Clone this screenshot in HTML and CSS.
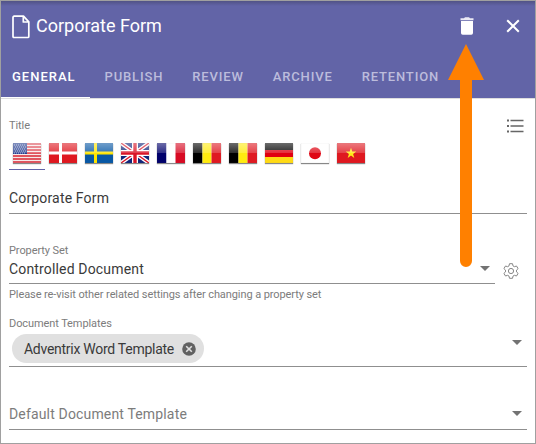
FILE: index.html
```html
<!DOCTYPE html>
<html lang="en">
<head>
<meta charset="utf-8">
<title>Corporate Form</title>
<link rel="stylesheet" href="styles.css">
</head>
<body>
<main class="panel">
  <header class="header">
    <div class="titlebar">
      <svg class="doc-icon" width="18" height="24" viewBox="0 0 18 24"><path d="M2.2 1.2H11.5L16.8 6.8V21.5Q16.8 22.5 15.8 22.5H2.2Q1 22.5 1 21.5V2.4Q1 1.2 2.2 1.2ZM11.3 1.5V7H16.5" fill="none" stroke="#fff" stroke-width="1.7" stroke-linejoin="round"/></svg>
      <h1 class="title">Corporate Form</h1>
      <svg class="trash" width="14" height="18" viewBox="0 0 14 18"><path d="M.5 1.2H4L5 .3H9L10 1.2H13.5V3.2H.5Z" fill="#ebeaf5"/><path d="M1 4H13V16Q13 17.7 11.3 17.7H2.7Q1 17.7 1 16Z" fill="#fff"/></svg>
      <svg class="close" width="14" height="14" viewBox="0 0 14 14"><path d="M1.2 1.2L12.8 12.8M12.8 1.2L1.2 12.8" stroke="#fff" stroke-width="2"/></svg>
    </div>
    <nav class="tabs">
      <a class="tab active">GENERAL</a>
      <a class="tab">PUBLISH</a>
      <a class="tab">REVIEW</a>
      <a class="tab">ARCHIVE</a>
      <a class="tab">RETENTION</a>
    </nav>
  </header>
  <section class="content">
    <div class="label-row">
      <span class="label">Title</span>
      <svg class="list-icon" width="18" height="14" viewBox="0 0 18 14"><path d="M1 1.5H3M1 7H3M1 12.5H3" stroke="#666" stroke-width="2"/><path d="M4.5 1.5H17.5M4.5 7H17.5M4.5 12.5H17.5" stroke="#666" stroke-width="1.6"/></svg>
    </div>
    <div class="flags">
      <span class="slot selected"><svg class="flag" viewBox="0 0 28 20"><path fill="#f7e9e9" d="M0 0H28V20H0Z"/><path d="M0 1H28M0 4H28M0 7H28M0 10H28M0 13H28M0 16H28M0 19H28" stroke="#d92532" stroke-width="1.5"/><path fill="#263f91" d="M0 0H14V11H0Z"/><path d="M1 2H13M2 4H13M1 6H13M2 8H13M1 10H13" stroke="#b9c2e0" stroke-width=".9" stroke-dasharray="1 1"/></svg></span>
      <span class="slot"><svg class="flag" viewBox="0 0 28 20"><path fill="#df1820" d="M0 0H28V20H0Z"/><path stroke="#fff" stroke-width="3" d="M11.5 0V20M0 10H28"/></svg></span>
      <span class="slot"><svg class="flag" viewBox="0 0 28 20"><path fill="#0858a5" d="M0 0H28V20H0Z"/><path stroke="#ffe500" stroke-width="3" d="M10.5 0V20M0 10H28"/></svg></span>
      <span class="slot"><svg class="flag" viewBox="0 0 28 20"><path fill="#10257a" d="M0 0H28V20H0Z"/><path stroke="#fff" stroke-width="4" d="M0 0L28 20M28 0L0 20"/><path stroke="#d91427" stroke-width="1.4" d="M0 0L28 20M28 0L0 20"/><path stroke="#fff" stroke-width="6" d="M14 0V20M0 10H28"/><path stroke="#d91427" stroke-width="3.4" d="M14 0V20M0 10H28"/></svg></span>
      <span class="slot"><svg class="flag" viewBox="0 0 28 20"><path fill="#00006b" d="M0 0H9.5V20H0Z"/><path fill="#fff" d="M9.5 0H18.5V20H9.5Z"/><path fill="#d80b24" d="M18.5 0H28V20H18.5Z"/></svg></span>
      <span class="slot"><svg class="flag" viewBox="0 0 28 20"><path d="M0 0H9.5V20H0Z"/><path fill="#ffeb10" d="M9.5 0H18.5V20H9.5Z"/><path fill="#df1a22" d="M18.5 0H28V20H18.5Z"/></svg></span>
      <span class="slot"><svg class="flag" viewBox="0 0 28 20"><path d="M0 0H9.5V20H0Z"/><path fill="#ffeb10" d="M9.5 0H18.5V20H9.5Z"/><path fill="#df1a22" d="M18.5 0H28V20H18.5Z"/></svg></span>
      <span class="slot"><svg class="flag" viewBox="0 0 28 20"><path d="M0 0H28V7H0Z"/><path fill="#e00010" d="M0 7H28V14H0Z"/><path fill="#ffda15" d="M0 14H28V20H0Z"/></svg></span>
      <span class="slot"><svg class="flag" viewBox="0 0 28 20"><path fill="#fff" d="M0 0H28V20H0Z"/><circle cx="14" cy="10.3" r="6" fill="#df0715"/></svg></span>
      <span class="slot"><svg class="flag" viewBox="0 0 28 20"><path fill="#df1820" d="M0 0H28V20H0Z"/><path fill="#ffeb18" d="M14 4.8L15.3 8.6H19.3L16.1 11L17.3 15L14 12.6L10.7 15L11.9 11L8.7 8.6H12.7Z"/></svg></span>
    </div>
    <div class="field name-field"><span class="value">Corporate Form</span></div>

    <div class="label property-label">Property Set</div>
    <div class="property-row">
      <div class="field select"><span class="value">Controlled Document</span><i class="caret"></i></div>
      <svg class="gear" width="16" height="16" viewBox="0 0 16 16"><g fill="none" stroke="#858585" stroke-width="1" stroke-linejoin="round"><path d="M6.5.7H9.5L10 2.9L11.4 3.7L13.5 3L15.1 5.6L13.5 7.1V8.9L15.1 10.4L13.5 13L11.4 12.3L10 13.1L9.5 15.3H6.5L6 13.1L4.6 12.3L2.5 13L.9 10.4L2.5 8.9V7.1L.9 5.6L2.5 3L4.6 3.7L6 2.9Z"/><circle cx="8" cy="8" r="2.6"/></g></svg>
    </div>
    <div class="label hint">Please re-visit other related settings after changing a property set</div>
    <div class="label templates-label">Document Templates</div>
    <div class="field chips">
      <span class="chip">Adventrix Word Template<svg width="14" height="14" viewBox="0 0 14 14"><circle cx="7" cy="7" r="6.8" fill="#616161"/><path d="M4.2 4.2L9.8 9.8M9.8 4.2L4.2 9.8" stroke="#e0e0e0" stroke-width="1.6"/></svg></span>
      <i class="caret"></i>
    </div>
    <div class="field select default-field"><span class="value placeholder">Default Document Template</span><i class="caret"></i></div>
  </section>
  <svg class="arrow" width="36" height="224" viewBox="0 0 36 224"><path d="M18 0L36 36H24V217A6 6 0 0 1 12 217V36H0Z" fill="#ff8000"/></svg>
</main>
</body>
</html>
```
FILE: styles.css
```css
* { box-sizing: border-box; }
body { margin: 0; font-family: Roboto, "Liberation Sans", sans-serif; color: #3a3a3a; }
.panel { position: relative; width: 536px; height: 444px; border: 1px solid #a0a0a0; background: #fff; overflow: hidden; }
.header { height: 98px; background: linear-gradient(#515286, #6264a7 5px); border-bottom: 1px solid #dedede; }
.titlebar { height: 50px; display: flex; align-items: center; padding: 0 15px 0 11px; }
.doc-icon { margin-top: 2px; }
.title { margin: 0 auto 0 6px; font-size: 18px; line-height: 24px; font-weight: 400; color: #fff; }
.trash { margin-right: 32px; }
.tabs { display: flex; height: 47px; }
.tab { height: 47px; padding: 16px 14.5px 0; font-size: 13px; line-height: 20px; font-weight: 500; letter-spacing: .85px; color: #bcbcdc; white-space: nowrap; }
.tab.active { width: 89px; padding-left: 11px; letter-spacing: 1px; color: #fff; border-bottom: 1px solid #fff; }
.content { padding: 19px 8px 0; }
.label-row { height: 20px; display: flex; justify-content: space-between; padding-right: 3px; }
.label { font-size: 11px; line-height: 16px; letter-spacing: -.09px; color: #7c7c7c; white-space: nowrap; }
.list-icon { margin-top: 1px; }
.flags { display: flex; height: 32px; }
.slot { width: 36px; height: 32px; padding: 5px 4px 0; position: relative; }
.selected { border-bottom: 1px solid #6264a7; }
.flag { display: block; width: 28px; height: 20px; box-shadow: 0 1px 1px #888; }
.slot::after { content: ""; position: absolute; left: 4px; top: 5px; width: 28px; height: 20px; background: linear-gradient(rgba(255,255,255,.42), rgba(255,255,255,.18) 50%, transparent 51%); box-shadow: inset 0 0 1px #8886; }
.field { border-bottom: 1px solid #8f8f8f; display: flex; justify-content: space-between; }
.value { font-size: 14px; line-height: 20px; letter-spacing: .16px; white-space: nowrap; }
.name-field { height: 44px; padding-top: 18px; }
.property-label { margin-top: 29px; height: 16px; }
.property-row { display: flex; height: 25px; }
.property-row .field { width: 486px; }
.gear { margin: 4px 0 0 8px; }
.caret { width: 0; height: 0; border: 5px solid transparent; border-top-color: #737373; border-bottom: 0; margin: 7px 5px 0 0; }
.hint { margin-top: 3px; }
.templates-label { margin-top: 13px; height: 18px; }
.chips { height: 33px; padding-left: 3px; }
.chip { width: 192px; height: 29px; border-radius: 15px; background: #e0e0e0; display: flex; align-items: center; justify-content: space-between; padding: 0 8px 0 12px; font-size: 14px; line-height: 20px; letter-spacing: -.27px; white-space: nowrap; }
.chips .caret { margin-top: 6px; }
.default-field { height: 63px; padding-top: 37px; }
.value.placeholder { color: #7c7c7c; }
.arrow { position: absolute; left: 447px; top: 43px; }
```
